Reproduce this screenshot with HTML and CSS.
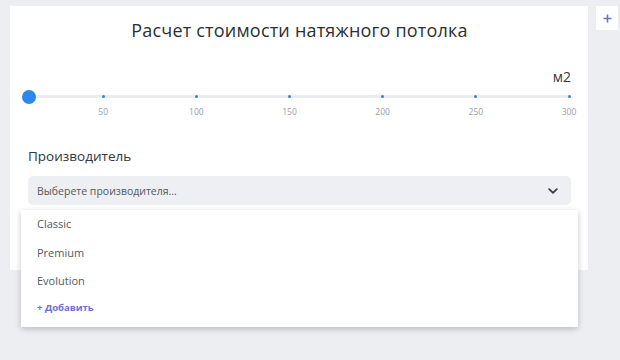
FILE: index.html
```html
<!DOCTYPE html>
<html lang="ru">
<head>
<meta charset="utf-8">
<link rel="stylesheet" href="styles.css">
</head>
<body>
<div class="page">
  <div class="card">
    <h1 class="title">Расчет стоимости натяжного потолка</h1>
    <div class="unit">м2</div>
    <div class="scale">
      <div class="track"></div>
      <div class="thumb"></div>
      <div class="tick" style="left:16.667%"><span class="dot"></span><span class="lbl">50</span></div>
      <div class="tick" style="left:33.333%"><span class="dot"></span><span class="lbl">100</span></div>
      <div class="tick" style="left:50%"><span class="dot"></span><span class="lbl">150</span></div>
      <div class="tick" style="left:66.667%"><span class="dot"></span><span class="lbl">200</span></div>
      <div class="tick" style="left:83.333%"><span class="dot"></span><span class="lbl">250</span></div>
      <div class="tick" style="left:100%"><span class="dot"></span><span class="lbl">300</span></div>
    </div>
    <div class="field">
      <div class="label">Производитель</div>
      <div class="select-wrap">
        <div class="select">
          <span class="placeholder">Выберете производителя...</span>
          <svg class="chev" width="10" height="6" viewBox="0 0 10 6"><path d="M1.2 1.2 L5 4.8 L8.8 1.2" fill="none" stroke="#3a3d44" stroke-width="1.8" stroke-linecap="round" stroke-linejoin="round"/></svg>
        </div>
        <div class="menu">
          <div class="item">Classic</div>
          <div class="item">Premium</div>
          <div class="item">Evolution</div>
          <div class="item add">+ Добавить</div>
        </div>
      </div>
    </div>
  </div>
  <div class="plus-btn">
    <svg width="9" height="9" viewBox="0 0 9 9"><path d="M4.5 0.5 V8.5 M0.5 4.5 H8.5" stroke="#6c6fd6" stroke-width="1.6"/></svg>
  </div>
</div>
</body>
</html>
```

FILE: styles.css
```css
* { box-sizing: border-box; }
html, body { margin: 0; padding: 0; }
body {
  background: #eceef1;
  font-family: "Open Sans", "Noto Sans", sans-serif;
  width: 620px;
  height: 360px;
  overflow: hidden;
}
.page {
  display: flex;
  align-items: flex-start;
  padding: 6px 0 0 10px;
  gap: 7px;
}
.card {
  width: 578px;
  height: 264px;
  background: #ffffff;
  padding: 12px 17px 0 18px;
  position: relative;
}
.title {
  margin: 0;
  text-align: center;
  font-weight: 400;
  font-size: 18px;
  line-height: 24px;
  color: #2b2e33;
  letter-spacing: 0.2px;
}
.unit {
  margin-top: 26px;
  text-align: right;
  font-size: 14px;
  line-height: 18px;
  color: #33363b;
}
.scale {
  position: relative;
  margin: 7px 0 0 -18px;
  width: 559px;
  height: 34px;
}
.track {
  position: absolute;
  left: 18px;
  right: -2px;
  top: 2px;
  height: 3px;
  background: #eaecef;
  border-radius: 2px;
}
.thumb {
  position: absolute;
  left: 12px;
  top: -3.5px;
  width: 14px;
  height: 14px;
  border-radius: 50%;
  background: #2f86ea;
}
.tick {
  position: absolute;
  top: 0;
  width: 0;
}
.dot {
  position: absolute;
  left: -1.5px;
  top: 2px;
  width: 3px;
  height: 3px;
  border-radius: 50%;
  background: #3f7fd0;
}
.lbl {
  position: absolute;
  left: -15px;
  width: 30px;
  top: 13px;
  text-align: center;
  font-size: 8.5px;
  line-height: 12px;
  color: #9a9da3;
}
.field {
  margin-top: 20px;
}
.label {
  font-size: 13.5px;
  line-height: 18px;
  color: #33363b;
}
.select-wrap {
  position: relative;
  margin-top: 11px;
  width: 543px;
}
.select {
  height: 29px;
  background: #edeff2;
  border-radius: 5px;
  display: flex;
  align-items: center;
  justify-content: space-between;
  padding: 0 13px 0 9px;
}
.placeholder {
  font-size: 10.5px;
  color: #55585e;
}
.menu {
  position: absolute;
  left: -7px;
  top: 34px;
  width: 557px;
  height: 117px;
  background: #ffffff;
  box-shadow: 0 2px 6px rgba(0, 0, 0, 0.22);
  padding: 7px 0 0 16px;
  display: flex;
  flex-direction: column;
}
.item {
  font-size: 11px;
  line-height: 14px;
  color: #55585e;
  margin-bottom: 14.5px;
}
.item.add {
  font-size: 9.5px;
  font-weight: 700;
  color: #6c6fd6;
  margin-top: -2px;
}
.plus-btn {
  width: 22px;
  height: 24px;
  background: #ffffff;
  display: flex;
  align-items: center;
  justify-content: center;
  margin-left: 1px;
}
```
